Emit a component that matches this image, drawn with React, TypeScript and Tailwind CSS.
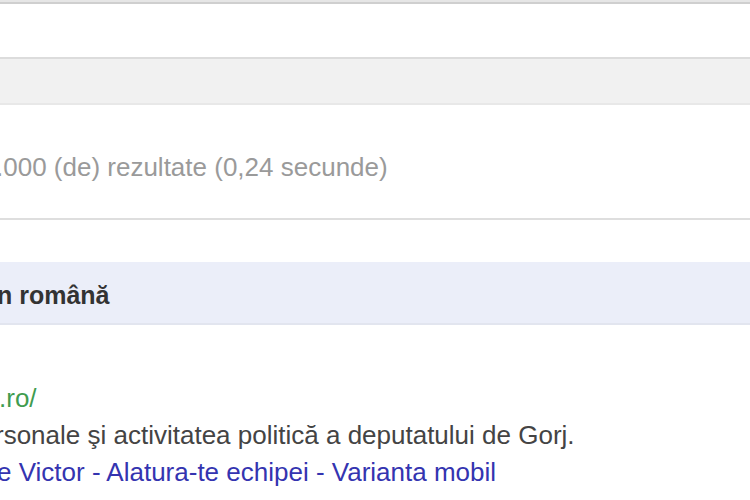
import React from "react";

export default function App() {
  const f = { fontFamily: '"Liberation Sans", Arial, sans-serif' };
  return (
    <div className="w-[750px] h-[500px] overflow-hidden bg-white" style={f}>
      <div className="h-[2px] bg-[#e6e6e6]" />
      <div className="h-[2px] bg-[#cfcfcf]" />
      <div className="h-[53px] bg-white" />
      <div className="h-[2px] bg-[#dcdcdc]" />
      <div className="h-[44px] bg-[#f1f1f1]" />
      <div className="h-[2px] bg-[#e8e8e8]" />
      <div className="h-[113px] flex items-center pt-[12px]">
        <span className="ml-[-4px] text-[26px] text-[#9a9a9a] whitespace-nowrap">.000 (de) rezultate (0,24 secunde)</span>
      </div>
      <div className="h-[2px] bg-[#dedede]" />
      <div className="h-[42px]" />
      <div className="h-[63px] bg-[#ebeef9] flex items-center border-b-2 border-[#e2e5ef] pt-[7px]">
        <span className="ml-[-3px] text-[25px] font-bold text-[#333] whitespace-nowrap">n română</span>
      </div>
      <div className="h-[55px]" />
      <div className="flex flex-col text-[26px] leading-[37px] whitespace-nowrap">
        <span className="ml-[-1px] text-[#3f9c50]">.ro/</span>
        <span className="ml-[-5px] text-[#444]">rsonale şi activitatea politică a deputatului de Gorj.</span>
        <span className="ml-[-3px] text-[#3434b0]">e Victor - Alatura-te echipei - Varianta mobil</span>
      </div>
    </div>
  );
}
